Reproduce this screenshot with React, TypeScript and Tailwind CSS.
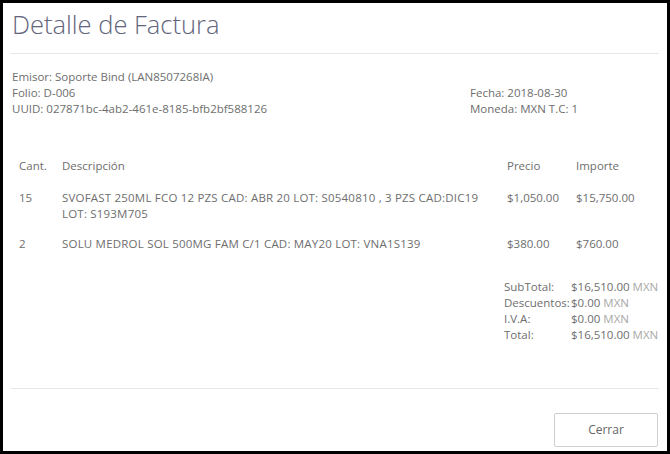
const items = [
  {
    cant: "15",
    desc: ["SVOFAST 250ML FCO 12 PZS CAD: ABR 20 LOT: S0540810 , 3 PZS CAD:DIC19", "LOT: S193M705"],
    precio: "$1,050.00",
    importe: "$15,750.00",
  },
  {
    cant: "2",
    desc: ["SOLU MEDROL SOL 500MG FAM C/1 CAD: MAY20 LOT: VNA1S139"],
    precio: "$380.00",
    importe: "$760.00",
  },
];

const totals = [
  { label: "SubTotal:", value: "$16,510.00" },
  { label: "Descuentos:", value: "$0.00" },
  { label: "I.V.A:", value: "$0.00" },
  { label: "Total:", value: "$16,510.00" },
];

export default function App() {
  return (
    <div
      className="w-[670px] h-[454px] bg-white border-[3px] border-black flex flex-col px-[8px] text-[#6e6e6e] text-[11.5px] leading-[16px]"
      style={{ fontFamily: '"Open Sans", "Liberation Sans", sans-serif' }}
    >
      {/* Header */}
      <div className="h-[51px] border-b border-[#e6e6e6] pt-[4px] pl-[1px]">
        <h1 className="text-[25.5px] leading-[34px] font-light text-[#62657c]">Detalle de Factura</h1>
      </div>

      {/* Emisor / fecha */}
      <div className="flex pt-[15px] pl-[1px]">
        <div className="w-[458px] flex flex-col">
          <span>Emisor: Soporte Bind (LAN8507268IA)</span>
          <span>Folio: D-006</span>
          <span>UUID: 027871bc-4ab2-461e-8185-bfb2bf588126</span>
        </div>
        <div className="flex flex-col pt-[16px]">
          <span>Fecha: 2018-08-30</span>
          <span>Moneda: MXN T.C: 1</span>
        </div>
      </div>

      {/* Table */}
      <div className="mt-[41px] pl-[8px] flex flex-col">
        <div className="flex h-[16px]">
          <div className="w-[43px]">Cant.</div>
          <div className="w-[445px]">Descripción</div>
          <div className="w-[69px]">Precio</div>
          <div>Importe</div>
        </div>
        {items.map((it, i) => (
          <div key={it.cant} className={i === 0 ? "flex mt-[16px]" : "flex mt-[14px]"}>
            <div className="w-[43px]">{it.cant}</div>
            <div className="w-[445px] flex flex-col tracking-[0.2px]">
              {it.desc.map((d) => (
                <span key={d}>{d}</span>
              ))}
            </div>
            <div className="w-[69px]">{it.precio}</div>
            <div>{it.importe}</div>
          </div>
        ))}
      </div>

      {/* Totals */}
      <div className="flex justify-end mt-[27px]">
        <div className="flex flex-col w-[155px]">
          {totals.map((t) => (
            <div key={t.label} className="flex">
              <span className="w-[67px] whitespace-nowrap">{t.label}</span>
              <span className="whitespace-nowrap">
                {t.value}&nbsp;<span className="text-[#a8a8a8]">MXN</span>
              </span>
            </div>
          ))}
        </div>
      </div>

      {/* Footer */}
      <div className="mt-auto border-t border-[#e6e6e6] flex justify-end pt-[24px] pb-[4px] pr-[1px]">
        <button className="w-[104px] h-[34px] border border-[#cfcfcf] bg-white text-[12px] text-[#666] rounded-[2px]">
          Cerrar
        </button>
      </div>
    </div>
  );
}
